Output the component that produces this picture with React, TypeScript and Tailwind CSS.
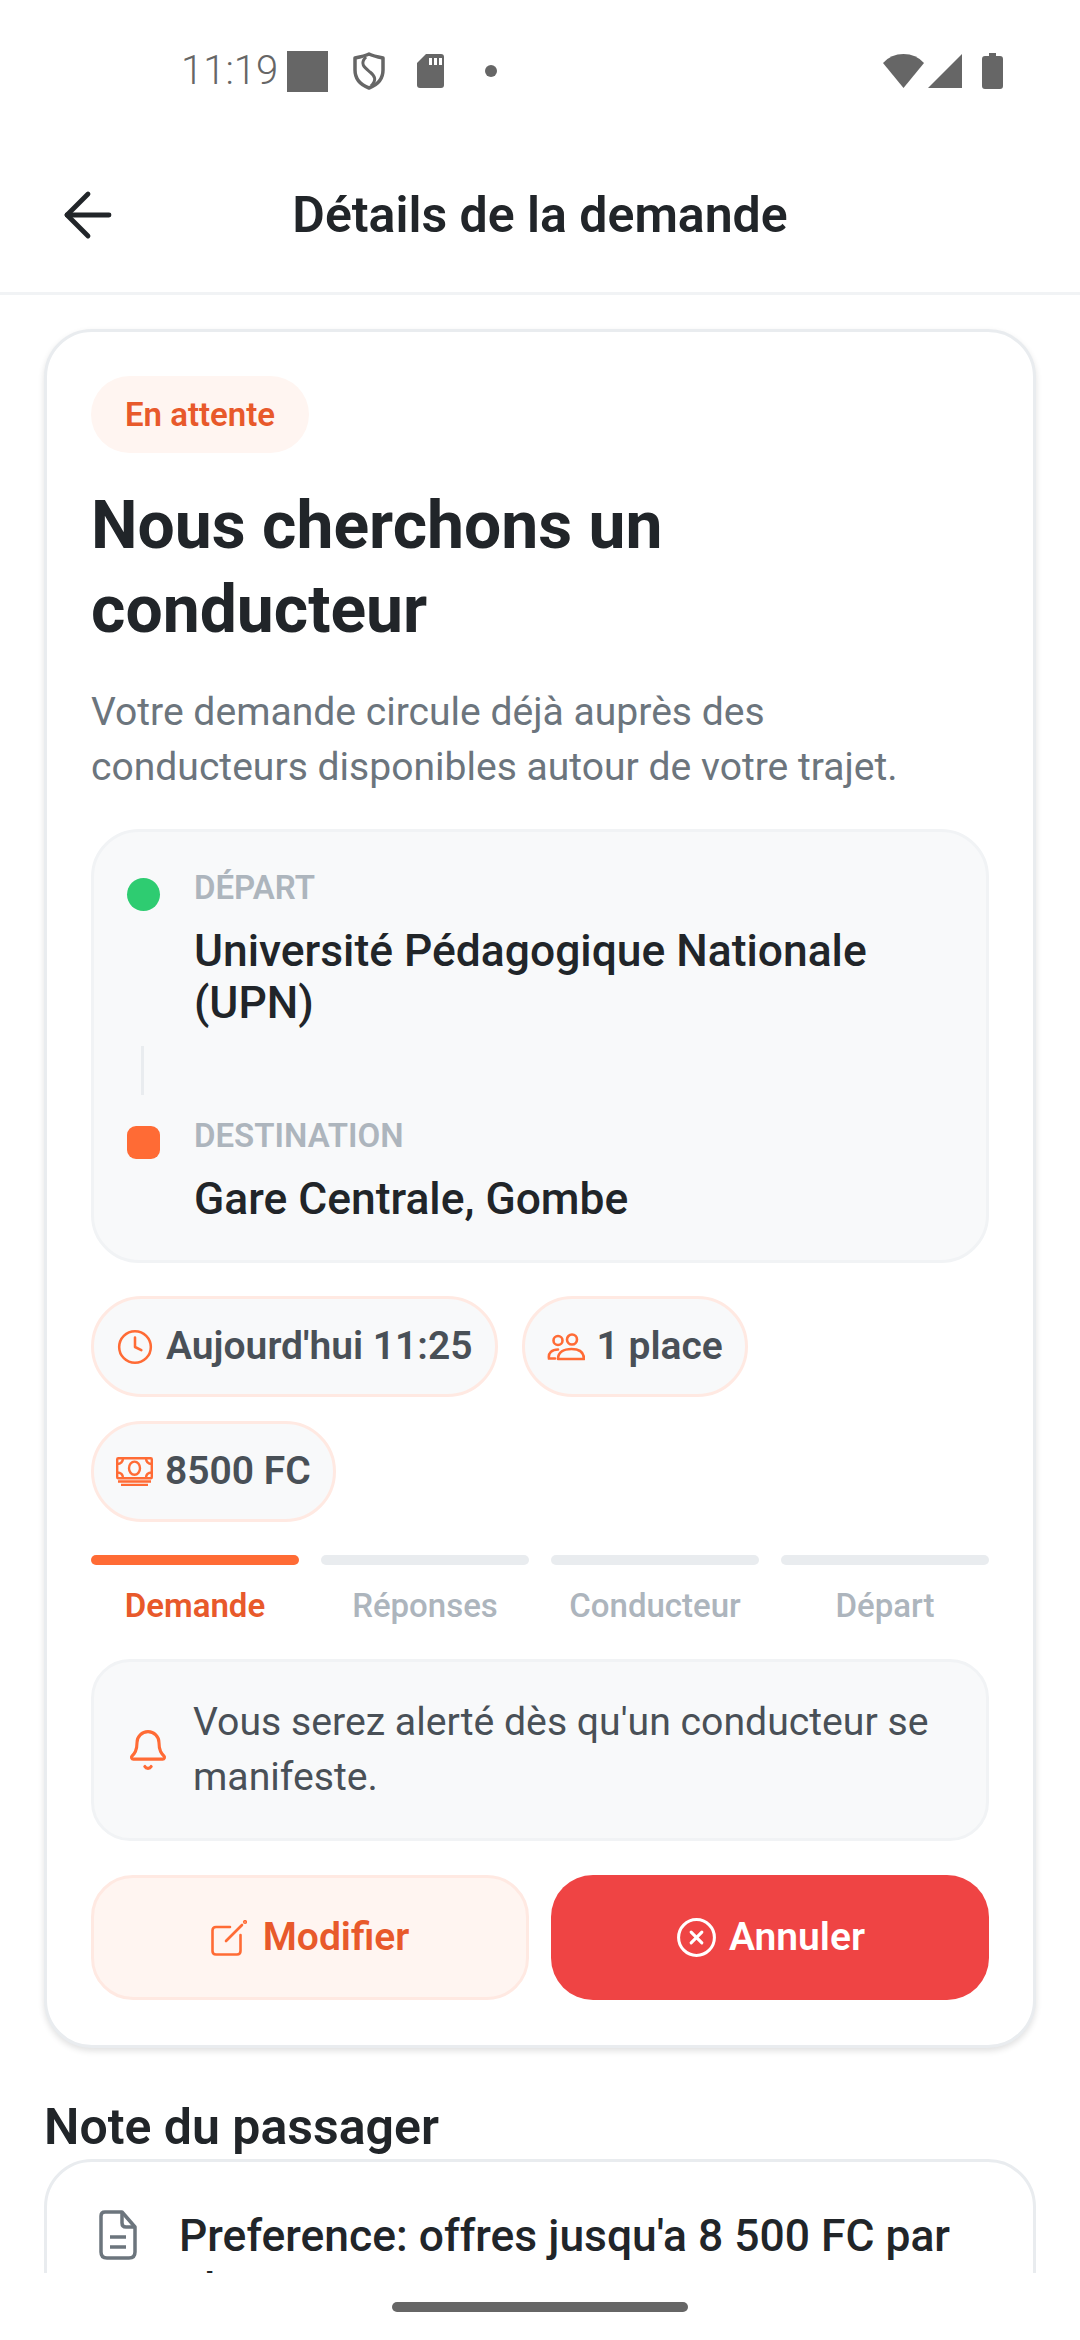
import React from 'react';
import { ArrowLeft, Bell, CircleX, Clock } from 'lucide-react';

const font = { fontFamily: 'Roboto, sans-serif' };

const StatusBar = () => (
  <div className="flex h-[100px] shrink-0 items-center justify-between pl-[181px] pr-[77px] pt-[42px] text-[#666]">
    <div className="flex items-center">
      <span className="w-[106px] text-[40px] font-light leading-none">11:19</span>
      <div className="h-[41px] w-[41px] bg-[#666]" />
      <svg className="ml-[25px]" width="32" height="38" viewBox="0 0 32 38" fill="none">
        <path d="M16 2 C20 4 25 5 30 6 V18 C30 27 24 33 16 36 C8 33 2 27 2 18 V6 C7 5 12 4 16 2 Z" stroke="#666" strokeWidth="3.5" strokeLinejoin="round" />
        <path d="M13 5 C6 12 12 16 17 20 C22 24 24 28 18 34" stroke="#666" strokeWidth="3" />
      </svg>
      <svg className="ml-[32px]" width="27" height="34" viewBox="0 0 27 34">
        <path d="M9 0 H24 Q27 0 27 3 V31 Q27 34 24 34 H3 Q0 34 0 31 V9 Z" fill="#666" />
        <path d="M12 4 h3 v7 h-3 z M17 4 h3 v7 h-3 z M22 4 h3 v7 h-3 z" fill="#fff" />
      </svg>
      <div className="ml-[41px] h-[12px] w-[12px] rounded-full bg-[#666]" />
    </div>
    <div className="flex items-center">
      <svg width="41" height="34" viewBox="0 0 41 34"><path d="M20.5 34 L0 9 Q8 0 20.5 0 Q33 0 41 9 Z" fill="#666" /></svg>
      <svg className="ml-[4px]" width="34" height="34" viewBox="0 0 34 34"><path d="M34 0 V34 H0 Z" fill="#666" /></svg>
      <svg className="ml-[20px]" width="21" height="36" viewBox="0 0 21 36"><path d="M7 0 H14 V3 H18 Q21 3 21 6 V33 Q21 36 18 36 H3 Q0 36 0 33 V6 Q0 3 3 3 H7 Z" fill="#666" /></svg>
    </div>
  </div>
);

const Chip = ({ icon, label }: { icon: React.ReactNode; label: string }) => (
  <div className="flex h-[101px] items-center gap-[12px] rounded-full border-[3px] border-[#ffe9e2] bg-[#f8f9fa] px-[22px]">
    {icon}
    <span className="text-[39px] font-semibold text-[#495057]">{label}</span>
  </div>
);

const Step = ({ label, active }: { label: string; active?: boolean }) => (
  <div className="flex flex-1 flex-col items-center gap-[21px]">
    <div className={active ? 'h-[10px] w-full rounded-full bg-[#ff6b35]' : 'h-[10px] w-full rounded-full bg-[#e9ecef]'} />
    <span className={active ? 'text-[33px] font-semibold leading-[40px] text-[#e8592b]' : 'text-[33px] font-medium leading-[40px] text-[#adb5bd]'}>
      {label}
    </span>
  </div>
);

export default function App() {
  return (
    <div className="flex h-[2340px] w-[1080px] flex-col overflow-hidden bg-white" style={font}>
      <StatusBar />

      <div className="relative flex h-[195px] shrink-0 items-center justify-center border-b-[3px] border-[#f1f3f5] pt-[39px]">
        <ArrowLeft className="absolute left-[52px] top-[79px]" size={72} strokeWidth={1.6} color="#212529" />
        <h1 className="text-[50px] font-semibold text-[#212529]">Détails de la demande</h1>
      </div>

      <main className="flex-1 overflow-hidden px-[44px] pt-[34px]">
        <section className="rounded-[48px] border-[3px] border-[#e9ecef] bg-white px-[44px] pb-[45px] pt-[44px] shadow-[0_3px_6px_rgba(0,0,0,0.12)]">
          <span className="inline-flex h-[77px] w-[218px] items-center justify-center rounded-full bg-[#fff5f1] text-[33px] font-semibold text-[#e8592b]">
            En attente
          </span>
          <h2 className="mt-[31px] text-[66px] font-bold leading-[84px] text-[#212529]">
            Nous cherchons un conducteur
          </h2>
          <p className="mt-[33px] text-[39.1px] leading-[55px] text-[#6c757d]">
            Votre demande circule déjà auprès des conducteurs disponibles autour de votre trajet.
          </p>

          <div className="mt-[34px] rounded-[48px] border-[3px] border-[#f1f3f5] bg-[#f8f9fa] px-[33px] pb-[35px] pt-[36px]">
            <div className="flex gap-[34px]">
              <div className="mt-[10px] h-[33px] w-[33px] shrink-0 rounded-full bg-[#2ecc71]" />
              <div>
                <div className="text-[33px] font-semibold leading-[40px] text-[#adb5bd]">DÉPART</div>
                <div className="mt-[17px] text-[44.4px] font-medium leading-[52px] text-[#212529]">
                  Université Pédagogique Nationale (UPN)
                </div>
              </div>
            </div>
            <div className="mb-[21px] ml-[14px] mt-[17px] h-[49px] w-[3px] bg-[#e9ecef]" />
            <div className="flex gap-[34px]">
              <div className="mt-[10px] h-[33px] w-[33px] shrink-0 rounded-[9px] bg-[#ff6b35]" />
              <div>
                <div className="text-[33px] font-semibold leading-[40px] text-[#adb5bd]">DESTINATION</div>
                <div className="mt-[17px] text-[44.4px] font-medium leading-[52px] text-[#212529]">Gare Centrale, Gombe</div>
              </div>
            </div>
          </div>

          <div className="mt-[33px] flex flex-wrap gap-[24px]">
            <Chip icon={<Clock size={38} strokeWidth={1.6} color="#ff6b35" />} label="Aujourd'hui 11:25" />
            <Chip
              icon={
                <svg width="38" height="28" viewBox="0 0 38 28" fill="none" stroke="#ff6b35" strokeWidth="2.6">
                  <circle cx="11" cy="7.5" r="4.5" />
                  <circle cx="25" cy="6.5" r="5" />
                  <path d="M8 25.5 H2 C1 20 5 16.5 11 16.5" strokeLinecap="round" />
                  <path d="M11 26 C11 19 17 16 24.5 16 C32 16 37 19 37 26 Z" strokeLinejoin="round" />
                </svg>
              }
              label="1 place"
            />
            <Chip
              icon={
                <svg width="37" height="29" viewBox="0 0 37 29" fill="none" stroke="#ff6b35" strokeWidth="2.4">
                  <rect x="1.2" y="1.2" width="34.6" height="20" rx="1" />
                  <ellipse cx="18.5" cy="11.2" rx="5.5" ry="6.6" />
                  <path d="M1 7 C5 7 7 5 7 1 M36 7 C32 7 30 5 30 1 M1 15.5 C5 15.5 7 17.5 7 21 M36 15.5 C32 15.5 30 17.5 30 21" />
                  <path d="M2 24.5 H35 M5 28 H32" />
                </svg>
              }
              label="8500 FC"
            />
          </div>

          <div className="mt-[33px] flex gap-[22px]">
            <Step label="Demande" active />
            <Step label="Réponses" />
            <Step label="Conducteur" />
            <Step label="Départ" />
          </div>

          <div className="mt-[33px] flex items-center gap-[23px] rounded-[39px] border-[3px] border-[#f1f3f5] bg-[#f8f9fa] px-[32px] py-[33px]">
            <Bell className="shrink-0" size={44} strokeWidth={1.7} color="#ff6b35" />
            <p className="text-[39.2px] leading-[55px] text-[#495057]">Vous serez alerté dès qu'un conducteur se manifeste.</p>
          </div>

          <div className="mt-[34px] grid grid-cols-2 gap-[22px]">
            <button className="flex h-[125px] items-center justify-center gap-[16px] rounded-[42px] border-[3px] border-[#ffe9e2] bg-[#fff5f1] text-[39px] font-semibold text-[#e8592b]">
              <svg width="36" height="36" viewBox="0 0 36 36" fill="none" stroke="#ff6b35" strokeWidth="2.6" strokeLinecap="round">
                <path d="M19 7 H5 Q1.5 7 1.5 10.5 V31 Q1.5 34.5 5 34.5 H26 Q29.5 34.5 29.5 31 V15" />
                <path d="M15 21 L31 5" />
                <circle cx="34" cy="2" r="0.8" />
              </svg>
              Modifier
            </button>
            <button className="flex h-[125px] items-center justify-center gap-[11px] rounded-[42px] bg-[#ef4444] text-[39px] font-semibold text-white">
              <CircleX size={43} strokeWidth={1.7} color="#ffffff" />
              Annuler
            </button>
          </div>
        </section>

        <h3 className="mt-[50px] text-[50px] font-semibold leading-[58px] text-[#212529]">Note du passager</h3>
        <section className="mt-[3px] flex gap-[42px] rounded-[48px] border-[3px] border-[#e9ecef] bg-white px-[52px] pb-[44px] pt-[48px]">
          <svg className="shrink-0" width="38" height="50" viewBox="0 0 38 50" fill="none" stroke="#6c757d" strokeWidth="3.5" strokeLinejoin="round">
            <path d="M6 2 H23 L36 17 V42 Q36 48 30 48 H8 Q2 48 2 42 V6 Q2 2 6 2 Z" />
            <path d="M23 2 V13 Q23 17 27 17 H36" />
            <path d="M11 27 H27 M11 37 H27" />
          </svg>
          <p className="text-[44.4px] font-medium leading-[53px] text-[#212529]">Preference: offres jusqu'a 8 500 FC par place</p>
        </section>
      </main>

      <div className="flex h-[67px] shrink-0 items-start justify-center bg-white pt-[29px]">
        <div className="h-[10px] w-[296px] rounded-full bg-[#666]" />
      </div>
    </div>
  );
}
